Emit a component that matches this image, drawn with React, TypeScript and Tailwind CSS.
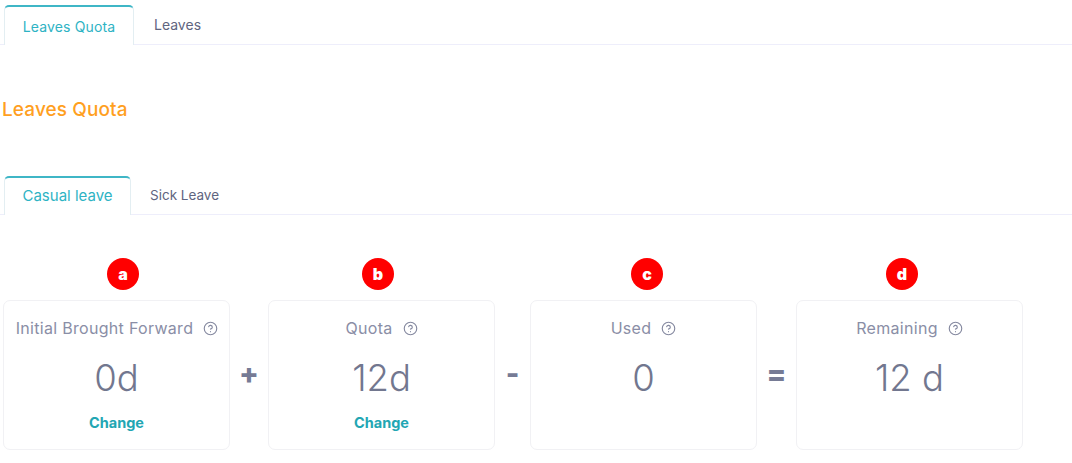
import { CircleHelp } from 'lucide-react'

const FONT = "font-['Inter','Open_Sans',sans-serif]"

const BADGES = [
  { letter: 'a', className: 'ml-[107px]' },
  { letter: 'b', className: 'ml-[223px]' },
  { letter: 'c', className: 'ml-[237px]' },
  { letter: 'd', className: 'ml-[223px]' },
]

function Tabs({ tabs, barClass, activeClass, otherClass }: { tabs: string[]; barClass: string; activeClass: string; otherClass: string }) {
  return (
    <div className={`${barClass} flex items-stretch border-b border-[#eeeefb] pl-1`}>
      <div className={`${activeClass} -mb-px flex items-center justify-center rounded-t-[5px] border border-b-0 border-[#e3eef2] border-t-2 border-t-[#3fb6c6] bg-white text-[#2eb3c4]`}>
        {tabs[0]}
      </div>
      <div className={`${otherClass} flex items-center text-[#5f6580]`}>{tabs[1]}</div>
    </div>
  )
}

function Card({ label, value, change, labelOffset }: { label: string; value: string; change?: boolean; labelOffset: string }) {
  return (
    <div className="flex h-[150px] w-[227px] shrink-0 flex-col items-center rounded-[7px] border border-[#f1f1f4] bg-white">
      <div className={`${labelOffset} mt-[17px] flex h-[20px] items-center gap-[10px] text-[16px] tracking-[0.3px] text-[#8a8ea6]`}>
        <span>{label}</span>
        <CircleHelp size={15} strokeWidth={1.8} className="text-[#84889f]" />
      </div>
      <div className="mt-[17px] h-[46px] text-[36.5px] leading-[46px] font-light text-[#72778f]">{value}</div>
      {change && <div className="mt-[13px] text-[14.5px] leading-[18px] font-bold text-[#22a6b3]">Change</div>}
    </div>
  )
}

function Operator({ symbol, width }: { symbol: string; width: string }) {
  return (
    <div className={`${width} flex shrink-0 items-center justify-center pb-[3px] text-[29px] leading-none font-extrabold text-[#767b95]`}>
      {symbol}
    </div>
  )
}

export default function App() {
  return (
    <div className={`${FONT} h-[463px] w-[1072px] overflow-hidden bg-white pt-[5px]`}>
      <Tabs
        tabs={['Leaves Quota', 'Leaves']}
        barClass="h-[40px]"
        activeClass="w-[130px] text-[14px] tracking-[0.15px]"
        otherClass="ml-[20px] text-[14px]"
      />

      <h1 className="mt-[52px] pl-[2px] text-[19px] leading-[26px] font-medium tracking-[0.1px] text-[#ffa01f]">Leaves Quota</h1>

      <div className="mt-[53px]">
        <Tabs
          tabs={['Casual leave', 'Sick Leave']}
          barClass="h-[39px]"
          activeClass="w-[127px] text-[15px]"
          otherClass="ml-[19px] text-[13.5px]"
        />
      </div>

      <div className="mt-[43px] flex">
        {BADGES.map(b => (
          <div
            key={b.letter}
            className={`${b.className} flex h-[32px] w-[32px] items-center justify-center rounded-full bg-[#ff0000] pb-[1px] text-[16px] font-black text-white`}
          >
            {b.letter}
          </div>
        ))}
      </div>

      <div className="mt-[10px] flex pl-[3px]">
        <Card label="Initial Brought Forward" value="0d" change labelOffset="ml-[1px]" />
        <Operator symbol="+" width="w-[38px]" />
        <Card label="Quota" value="12d" change labelOffset="" />
        <Operator symbol="-" width="w-[35px]" />
        <Card label="Used" value="0" labelOffset="" />
        <Operator symbol="=" width="w-[39px]" />
        <Card label="Remaining" value="12 d" labelOffset="" />
      </div>
    </div>
  )
}
